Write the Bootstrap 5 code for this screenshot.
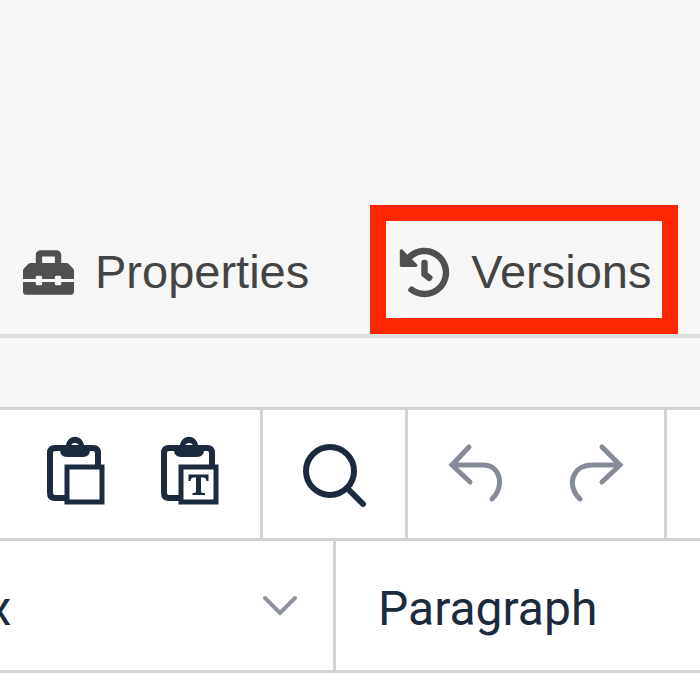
<!DOCTYPE html>
<html lang="en">
<head>
<meta charset="utf-8">
<meta name="viewport" content="width=device-width, initial-scale=1">
<title>Content editor</title>
<link href="https://cdn.jsdelivr.net/npm/bootstrap@5.3.0/dist/css/bootstrap.min.css" rel="stylesheet">
<style>
  body { background: #fff; overflow-x: hidden; }
  .editor-head { background: #f7f7f7; padding-top: 205px; padding-bottom: 69px; }
  .editor-tabs { border-bottom: 4px solid #dddedf; padding-left: 7px; gap: 45px; }
  .editor-tab { border: 16px solid transparent; border-left-width: 0; border-right-width: 0; height: 129px; color: #444; font: 47px/56px "Liberation Sans", Arial, sans-serif; gap: 21px; padding: 5px 16px 0 16px; text-decoration: none; white-space: nowrap; }
  .editor-tab:hover { color: #222; }
  .editor-tab.marked { border: 16px solid #ff2600; padding: 5px 10px 0 13px; }
  .editor-tab svg { width: 51px; height: 51px; fill: #505050; flex: none; }
  .tools { border-top: 3px solid #d3d3d3; border-bottom: 3px solid #d3d3d3; overflow: hidden; }
  .tool-group { border-right: 3px solid #d3d3d3; padding: 7px 14px; flex: none; }
  .tool-group.first { padding-left: 18px; }
  .tool { width: 114px; height: 114px; border: 0; border-radius: 9px; background: none; color: #1b2b3d; padding: 0; }
  .tool:disabled { color: #858c97; }
  .tool svg { width: 72px; height: 72px; overflow: visible; fill: none; stroke: currentColor; }
  .formats { border-bottom: 3px solid #d3d3d3; overflow: hidden; }
  .formats .form-select { border: 0; border-radius: 0; height: 129px; font: 48px/56px Roboto, sans-serif; color: #1b2b3d; background-color: #fff; background-image: none; }
  .formats .size-pick { width: 456px; margin-left: -120px; padding: 7px 60px 0 27px; border-right: 3px solid #d3d3d3; background-image: url("data:image/svg+xml,%3Csvg xmlns='http://www.w3.org/2000/svg' viewBox='0 0 36 22'%3E%3Cpath d='M3 3l15 15L33 3' fill='none' stroke='%238e949e' stroke-width='4' stroke-linecap='round'/%3E%3C/svg%3E"); background-size: 36px 22px; background-position: right 35px center; }
  .formats .block-pick { padding: 7px 40px 0 42px; }
</style>
</head>
<body>
<header class="editor-head">
  <nav class="editor-tabs d-flex" aria-label="Content views">
    <a class="editor-tab d-flex align-items-center" href="#properties">
      <svg viewBox="0 0 512 512" aria-hidden="true"><path d="M502.63 214.63l-45.25-45.25c-6-6-14.14-9.37-22.63-9.37H384V80c0-26.51-21.49-48-48-48H176c-26.51 0-48 21.49-48 48v80H77.25c-8.49 0-16.62 3.37-22.63 9.37L9.37 214.63c-6 6-9.37 14.14-9.37 22.63V320h128v-16c0-8.84 7.16-16 16-16h32c8.84 0 16 7.16 16 16v16h128v-16c0-8.84 7.16-16 16-16h32c8.84 0 16 7.16 16 16v16h128v-82.75c0-8.48-3.37-16.62-9.37-22.62zM320 160H192V96h128v64zm64 208c0 8.84-7.16 16-16 16h-32c-8.84 0-16-7.16-16-16v-16H192v16c0 8.84-7.16 16-16 16h-32c-8.84 0-16-7.16-16-16v-16H0v96c0 17.67 14.33 32 32 32h448c17.67 0 32-14.33 32-32v-96H384v16z"/></svg>
      <span>Properties</span>
    </a>
    <a class="editor-tab marked d-flex align-items-center" href="#versions">
      <svg viewBox="0 0 512 512" aria-hidden="true"><path d="M504 255.531c.253 136.64-111.18 248.372-247.82 248.468-59.015.042-113.223-20.53-155.822-54.911-11.077-8.94-11.905-25.541-1.839-35.607l11.267-11.267c8.609-8.609 22.353-9.551 31.891-1.984C173.062 425.135 212.781 440 256 440c101.705 0 184-82.311 184-184 0-101.705-82.311-184-184-184-48.814 0-93.149 18.969-126.068 49.932l50.754 50.754c10.08 10.08 2.941 27.314-11.313 27.314H24c-8.837 0-16-7.163-16-16V38.627c0-14.254 17.234-21.393 27.314-11.314l49.372 49.372C129.209 34.136 189.552 8 256 8c136.81 0 247.747 110.78 248 247.531zm-180.912 78.784l9.823-12.63c8.138-10.463 6.253-25.542-4.21-33.679L288 256.349V152c0-13.255-10.745-24-24-24h-16c-13.255 0-24 10.745-24 24v135.651l65.409 50.874c10.463 8.137 25.541 6.253 33.679-4.21z"/></svg>
      <span>Versions</span>
    </a>
  </nav>
</header>
<main>
  <div class="tools d-flex" role="toolbar" aria-label="Editing">
    <div class="tool-group first d-flex">
      <button class="tool d-flex align-items-center justify-content-center" type="button" aria-label="Paste">
        <svg viewBox="0 0 72 72"><path d="M26 60H16q-5 0-5-5V15q0-5 5-5h38q5 0 5 5v14" stroke-width="6"/><path fill="currentColor" stroke="none" fill-rule="evenodd" d="M21 7h6C29-4 43-4 45 7h6v5q0 7-7 7H28q-7 0-7-7zM36 5a4 4 0 1 0 0 8a4 4 0 1 0 0-8z"/><path d="M28 29h35v35H28z" stroke-width="5"/></svg>
      </button>
      <button class="tool d-flex align-items-center justify-content-center" type="button" aria-label="Paste as text">
        <svg viewBox="0 0 72 72"><path d="M26 60H16q-5 0-5-5V15q0-5 5-5h38q5 0 5 5v14" stroke-width="6"/><path fill="currentColor" stroke="none" fill-rule="evenodd" d="M21 7h6C29-4 43-4 45 7h6v5q0 7-7 7H28q-7 0-7-7zM36 5a4 4 0 1 0 0 8a4 4 0 1 0 0-8z"/><path d="M28 29h35v35H28z" stroke-width="5"/><path fill="currentColor" stroke="none" d="M35.500 36.500h20v6.500h-2q-.5-3.500-3-3.500H48v14q0 1.500 4 1.500v2H39.500v-2q3.500 0 3.500-1.500v-14h-2.500q-2.500 0-3 3.500h-2z"/></svg>
      </button>
    </div>
    <div class="tool-group d-flex">
      <button class="tool d-flex align-items-center justify-content-center" type="button" aria-label="Find and replace">
        <svg viewBox="0 0 72 72" stroke-width="6"><circle cx="32" cy="33" r="24"/><path d="M49 50l16 16" stroke-linecap="round"/></svg>
      </button>
    </div>
    <div class="tool-group d-flex">
      <button class="tool d-flex align-items-center justify-content-center" type="button" aria-label="Undo" disabled>
        <svg viewBox="0 0 72 72" stroke-width="5" stroke-linecap="round"><path d="M26 9L9 27l18 17M10 27h30c18 0 22 22 9 34"/></svg>
      </button>
      <button class="tool d-flex align-items-center justify-content-center" type="button" aria-label="Redo" disabled>
        <svg viewBox="0 0 72 72" stroke-width="5" stroke-linecap="round"><path d="M45 9l18 18-18 17M62 27H35C15 27 9 48 23 61"/></svg>
      </button>
    </div>
  </div>
  <div class="formats d-flex">
    <select class="form-select size-pick flex-shrink-0" aria-label="Font size"><option>14px</option></select>
    <select class="form-select block-pick flex-fill" aria-label="Block format"><option>Paragraph</option></select>
  </div>
</main>
<script src="https://cdn.jsdelivr.net/npm/bootstrap@5.3.0/dist/js/bootstrap.bundle.min.js"></script>
</body>
</html>
